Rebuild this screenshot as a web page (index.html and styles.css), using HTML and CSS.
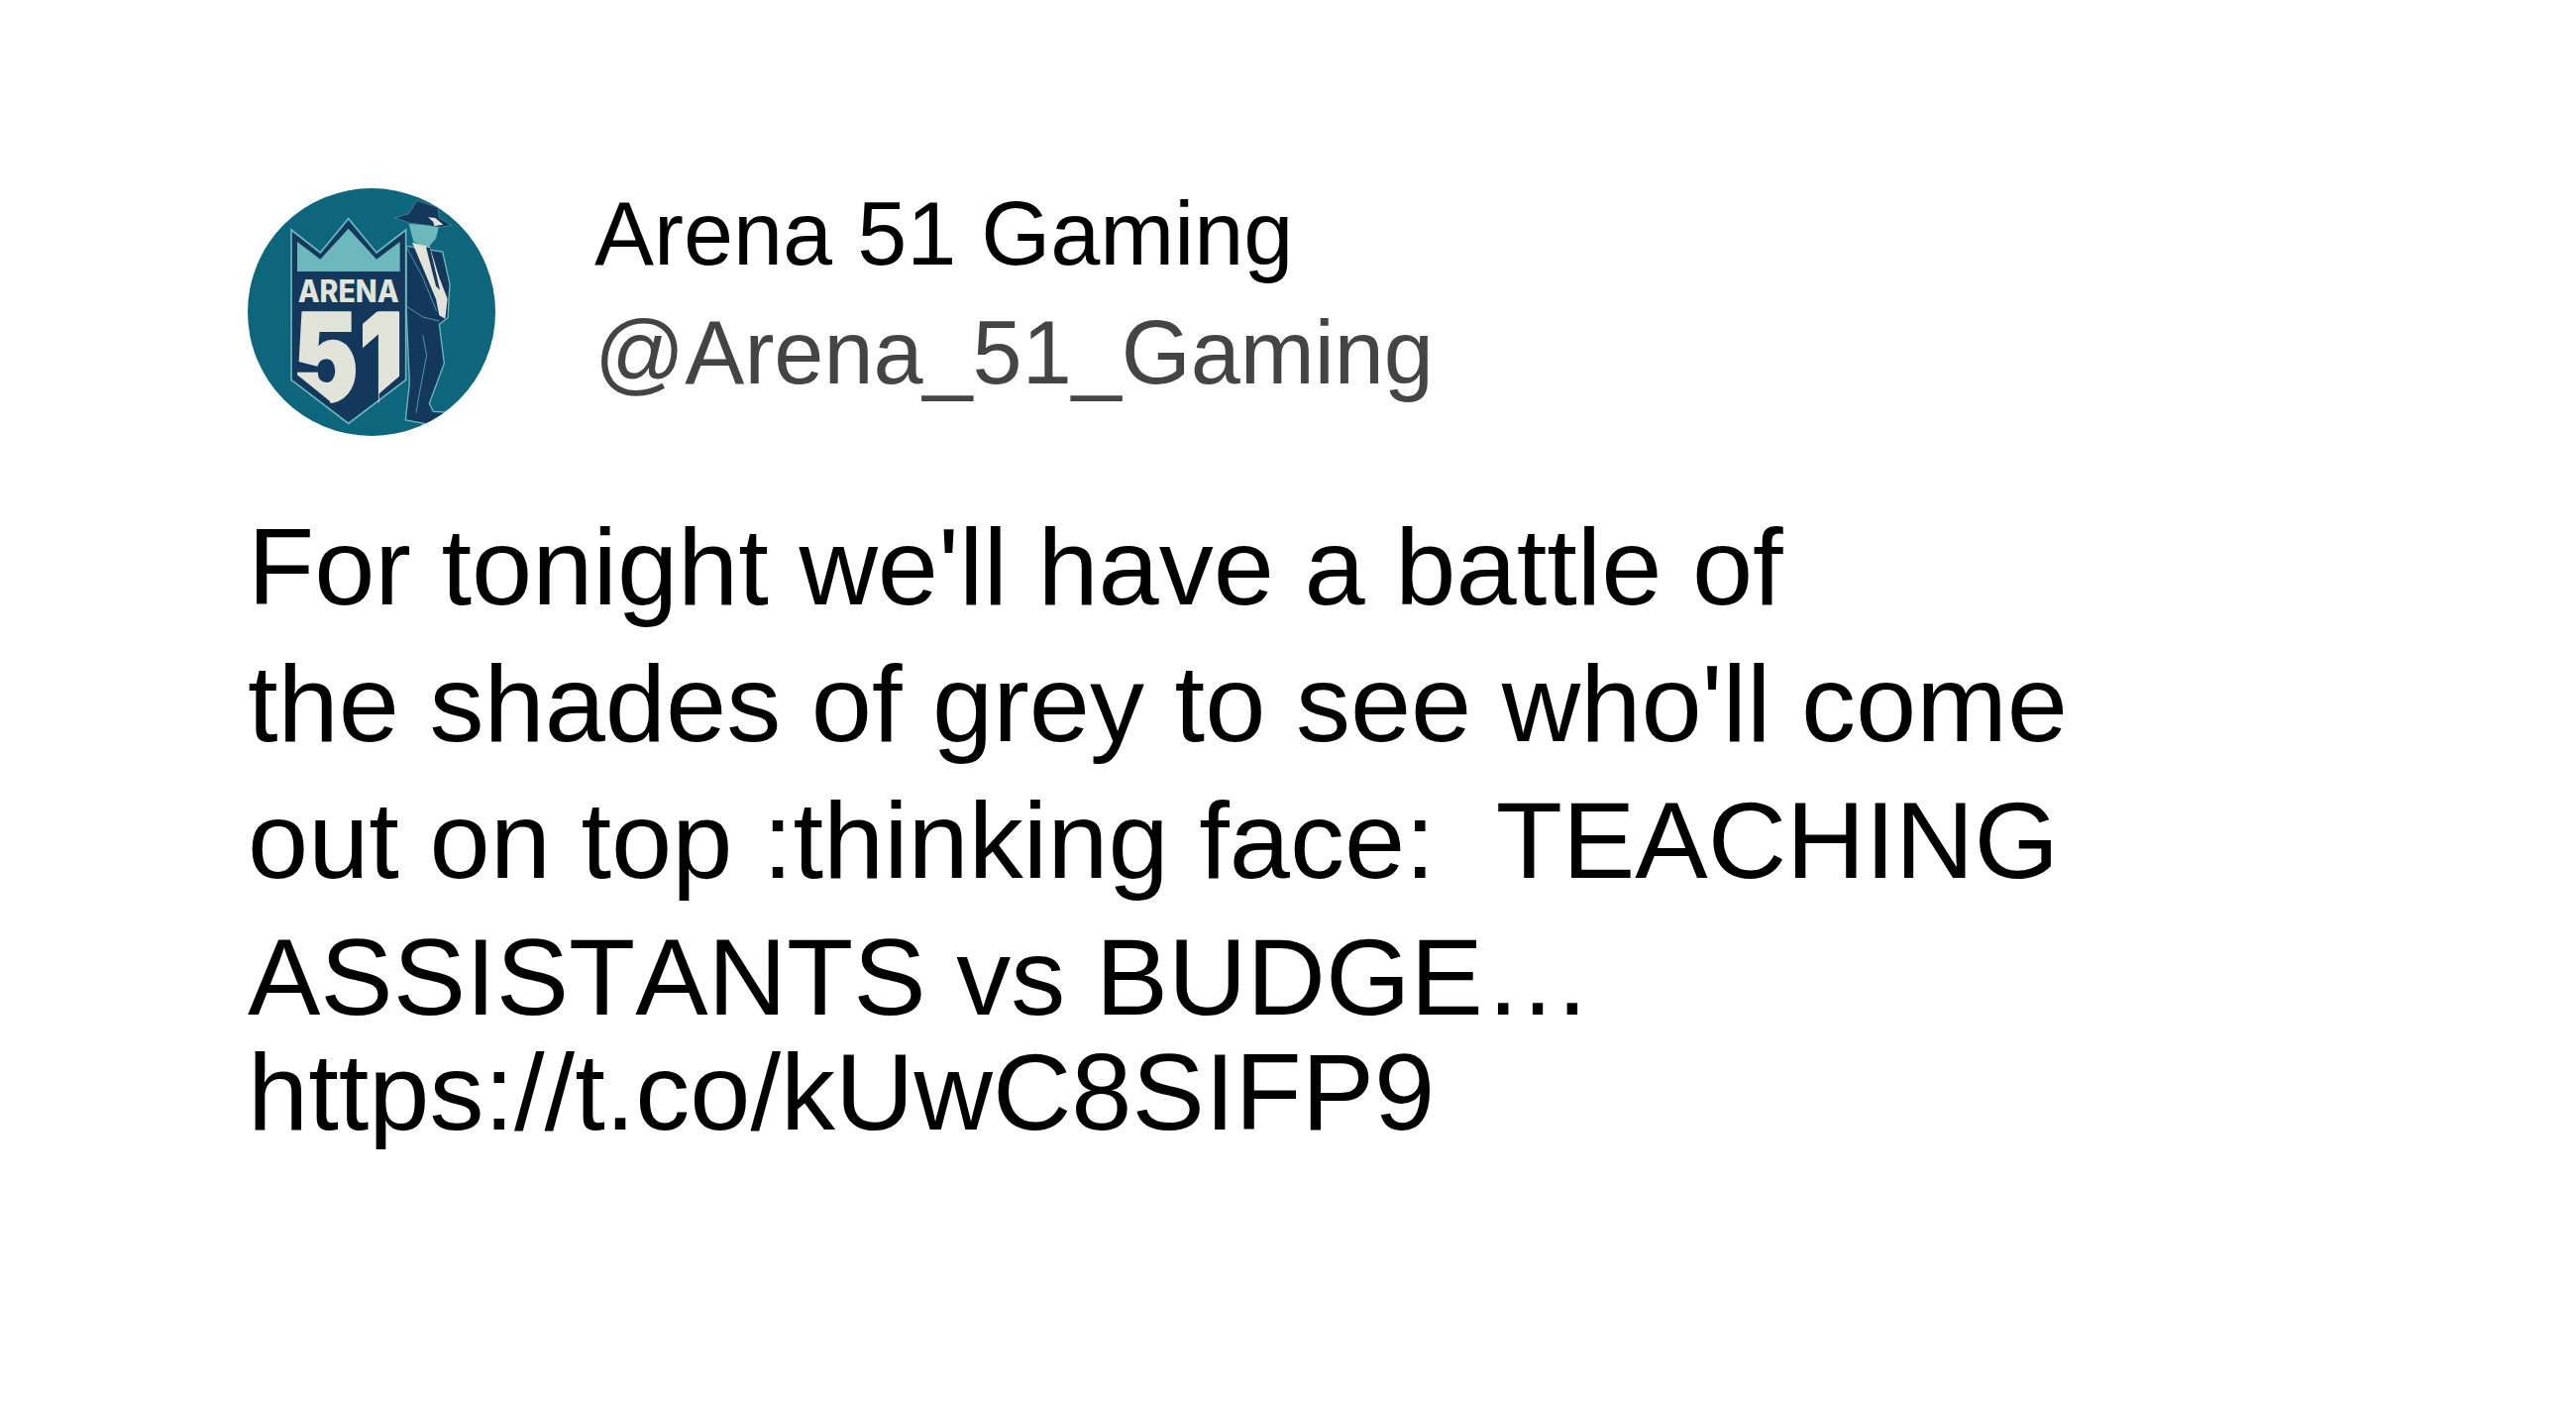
FILE: index.html
```html
<!DOCTYPE html>
<html lang="en">
<head>
<meta charset="utf-8">
<title>Arena 51 Gaming</title>
<link rel="stylesheet" href="styles.css">
</head>
<body>
<article class="tweet">
  <header class="head">
    <svg class="avatar" viewBox="60 60 750 750" width="250" height="250" aria-label="Arena 51 logo">
      <defs>
        <clipPath id="disc"><circle cx="435" cy="435" r="375"/></clipPath>
        <clipPath id="shield"><path d="M210 433 L521 433 L521 628 L458 682 L458 760 L310 760 L310 706 L210 625 Z"/></clipPath>
      </defs>
      <circle cx="435" cy="435" r="375" fill="#0d667b"/>
      <g clip-path="url(#disc)">
        <path class="suit" d="M540 235 L650 252 L672 350 L666 452 L640 472 L655 590 L610 712 L622 736 L660 738 L610 775 L538 762 L550 650 L540 420 Z"/>
        <path class="seam" d="M542 240 L590 330 L632 432 M542 418 L590 450 L640 462 M590 505 L602 565 L580 680 L570 740"/>
        <path class="shield" d="M192 186 L280 255 L365 152 L450 255 L539 186 L539 640 L365 772 L192 640 Z"/>
        <path class="crown" d="M210 222 L280 275 L365 182 L450 275 L521 222 L521 312 L210 312 Z"/>
        <text class="logo-word" x="212" y="405" textLength="306" lengthAdjust="spacingAndGlyphs">ARENA</text>
        <g clip-path="url(#shield)">
          <text class="logo-num" x="198" y="704" textLength="196" lengthAdjust="spacingAndGlyphs">5</text>
          <text class="logo-num" x="398" y="704" textLength="132" lengthAdjust="spacingAndGlyphs">1</text>
        </g>
        <path class="crown" d="M548 168 L640 172 L630 212 L606 240 L562 222 Z"/>
        <path class="shirt" d="M558 224 L612 238 L640 330 L665 395 L658 455 L640 445 L630 395 Z"/>
        <path class="tie" d="M600 238 L612 240 L642 368 L630 356 Z"/>
        <path class="hat" d="M505 150 L548 137 L572 97 L636 118 L640 150 L678 172 L640 178 L600 172 L548 165 Z"/>
        <path class="shirt" d="M606 148 L628 150 L652 170 L625 174 L622 162 Z"/>
      </g>
    </svg>
    <div class="names">
      <div class="name">Arena 51 Gaming</div>
      <div class="handle">@Arena_51_Gaming</div>
    </div>
  </header>
  <div class="body">
    <p class="text">For tonight we'll have a battle of<br>the shades of grey to see who'll come<br>out on top :thinking face:&nbsp; TEACHING<br>ASSISTANTS vs BUDGE…</p>
    <p class="link">https://t.co/kUwC8SIFP9</p>
  </div>
</article>
</body>
</html>
```
FILE: styles.css
```css
html, body { margin: 0; background: #fff; }
body { font-family: "Liberation Sans", Arial, sans-serif; color: #000; font-kerning: none; }
.tweet { padding: 176px 250px 0; }
.head { display: flex; align-items: flex-start; gap: 100px; }
.avatar { display: block; flex: none; margin-top: 14px; }
.names { display: flex; flex-direction: column; }
.name { font-size: 90px; line-height: 120px; color: #000; }
.handle { font-size: 90px; line-height: 120px; color: #444; }
.body { margin-top: 63px; }
.text { margin: 0; font-size: 110px; line-height: 138px; }
.link { margin: -11px 0 0; font-size: 110px; line-height: 116px; }
.suit { fill: #14375c; stroke: #6db8bd; stroke-width: 4; }
.seam { fill: none; stroke: #4f9aa6; stroke-width: 3; }
.shield { fill: #14375c; stroke: #6db8bd; stroke-width: 5; }
.crown { fill: #6cb8bd; }
.shirt { fill: #e2e4da; }
.tie { fill: #14375c; }
.hat { fill: #14375c; stroke: #4f9aa6; stroke-width: 2; }
.logo-word { font-family: "Inter", sans-serif; font-weight: 800; font-size: 92px; fill: #e2e4da; }
.logo-num { font-family: "Inter", sans-serif; font-weight: 900; font-size: 374px; fill: #e2e4da; stroke: #e2e4da; stroke-width: 8px; }
```
